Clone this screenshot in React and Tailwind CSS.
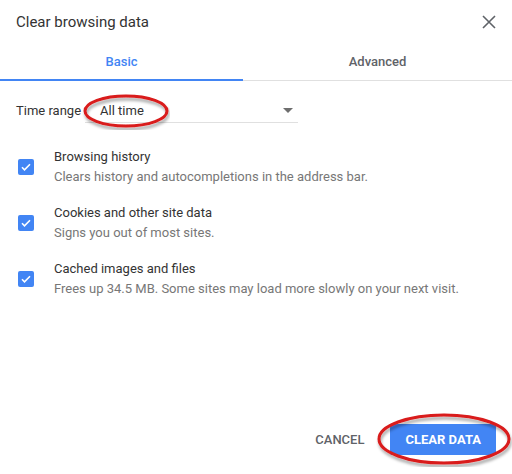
import React from 'react';

const items = [
    { title: 'Browsing history', desc: 'Clears history and autocompletions in the address bar.' },
    { title: 'Cookies and other site data', desc: 'Signs you out of most sites.' },
    { title: 'Cached images and files', desc: 'Frees up 34.5 MB. Some sites may load more slowly on your next visit.' },
];

function Check() {
    return (
        <div className="w-4 h-4 rounded-[2px] bg-[#4285f4] flex items-center justify-center shrink-0">
            <svg width="12" height="12" viewBox="0 0 24 24">
                <path d="M4 12.5l5 5L20 6.5" fill="none" stroke="#fff" strokeWidth="3.2" />
            </svg>
        </div>
    );
}

// red hand-drawn annotation ring
function Ring({ className, w, h }) {
    return (
        <svg className={className} width={w} height={h} viewBox={`0 0 ${w} ${h}`}>
            <defs>
                <filter id={`sh${w}`} x="-10%" y="-20%" width="120%" height="150%">
                    <feDropShadow dx="1" dy="3" stdDeviation="1.5" floodColor="#000" floodOpacity="0.35" />
                </filter>
            </defs>
            <ellipse cx={w / 2} cy={h / 2} rx={w / 2 - 3} ry={h / 2 - 4} fill="none" stroke="#d91a1a" strokeWidth="3" filter={`url(#sh${w})`} />
        </svg>
    );
}

export default function App() {
    return (
        <div className="relative w-[512px] h-[474px] bg-white text-[#333] flex flex-col" style={{ fontFamily: 'Roboto, "Liberation Sans", sans-serif' }}>
            {/* Header */}
            <div className="flex items-center justify-between px-4 h-[44px]">
                <h1 className="text-[15px] text-[#333]">Clear browsing data</h1>
                <svg width="14" height="14" viewBox="0 0 14 14">
                    <path d="M1 1L13 13M13 1L1 13" stroke="#5f6368" strokeWidth="1.6" />
                </svg>
            </div>

            {/* Tabs */}
            <div className="flex h-[37px] border-b border-[#e0e0e0]">
                <div className="w-[243px] flex items-center justify-center text-[13px] font-medium text-[#4285f4] border-b-2 border-[#4285f4] -mb-[1px]">Basic</div>
                <div className="flex-1 flex items-center justify-center text-[13px] font-medium text-[#5f6368]">Advanced</div>
            </div>

            {/* Time range */}
            <div className="flex items-center pl-4 mt-[18px] h-[24px] text-[13px]">
                <span className="text-[#333]">Time range</span>
                <div className="ml-[4px] w-[213px] h-[24px] border-b border-[#e0e0e0] flex items-center justify-between">
                    <span className="pl-[15px] text-[#333]">All time</span>
                    <svg width="10" height="5" viewBox="0 0 10 5" className="mr-[5px]">
                        <path d="M0 0h10L5 5z" fill="#6e6e6e" />
                    </svg>
                </div>
            </div>

            {/* Items */}
            <div className="flex flex-col gap-[16px] mt-[24px] pl-[18px]">
                {items.map(it => (
                    <div key={it.title} className="flex items-center">
                        <Check />
                        <div className="ml-[20px] text-[13px] leading-[20px]">
                            <div className="text-[#333]">{it.title}</div>
                            <div className="text-[#777]">{it.desc}</div>
                        </div>
                    </div>
                ))}
            </div>

            {/* Footer */}
            <div className="mt-auto flex items-center justify-end gap-[26px] pr-4 pb-[19px]">
                <span className="text-[13px] font-medium text-[#5f6368]">CANCEL</span>
                <button className="h-[31px] px-[15px] rounded-[2px] bg-[#4285f4] text-white text-[13px] font-bold">CLEAR DATA</button>
            </div>

            <Ring className="absolute left-[82px] top-[92px]" w={88} h={38} />
            <Ring className="absolute left-[376px] top-[411px]" w={136} h={56} />
        </div>
    );
}
